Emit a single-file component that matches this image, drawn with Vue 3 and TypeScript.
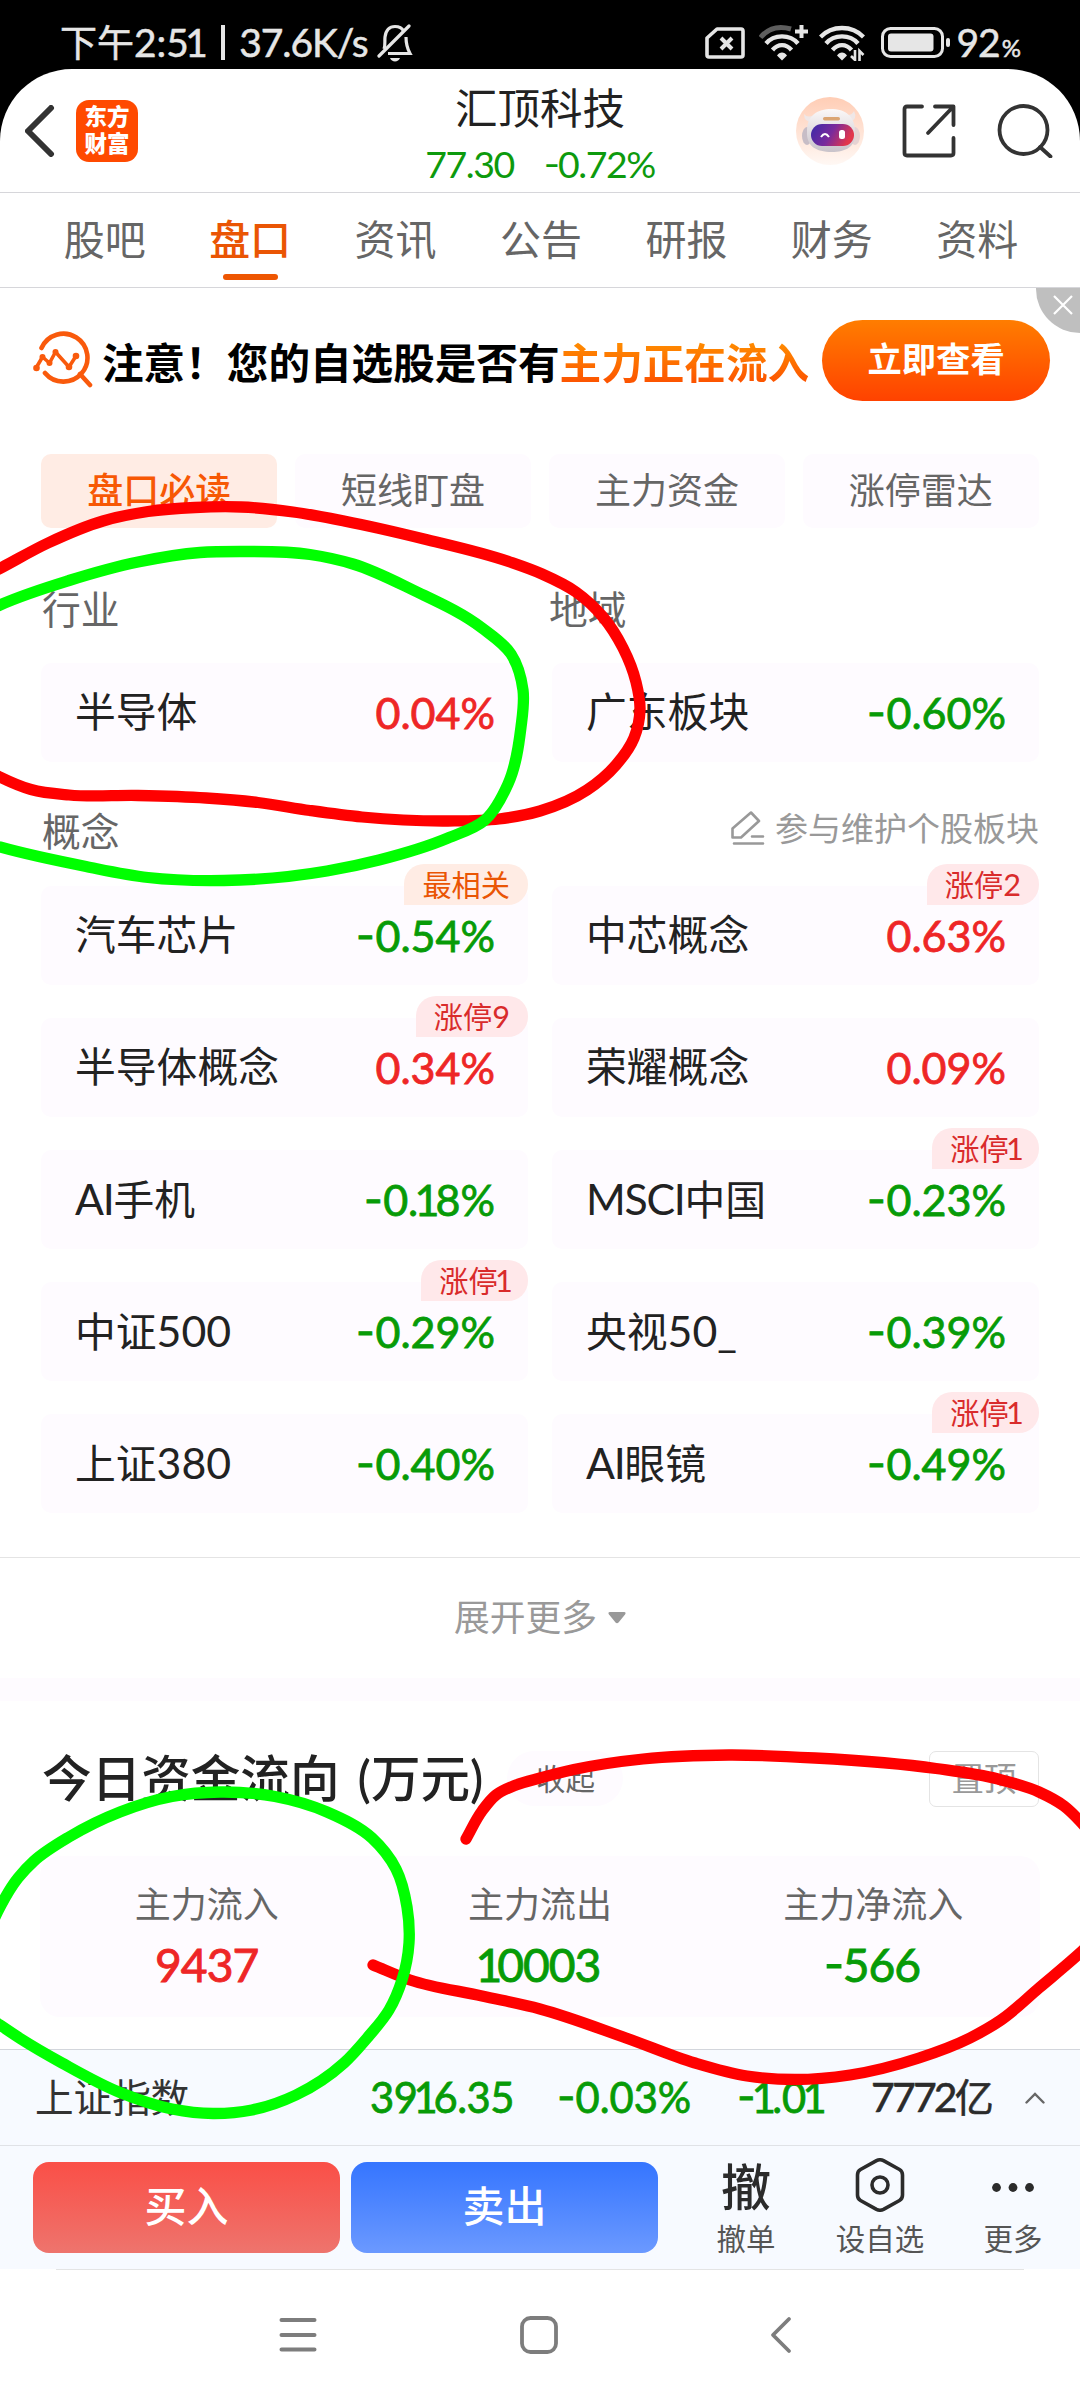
<script setup lang="ts">
import { h, type FunctionalComponent } from 'vue'

type Trend = 'up' | 'down'
interface Board {
  name: string
  change: string
  badge?: string
  hot?: boolean
}
type Point = [number, number]

// The digit 1 and the minus sign get their own spacing inside a Latin run.
const latin = (part: string) =>
  part.split(/([1-])/).filter(Boolean).map((s) => {
    if (s === '1') return h('span', { class: 'one' }, s)
    if (s === '-') return h('span', { class: 'dash' }, s)
    return s
  })

// Latin runs are set a little larger than the Chinese text around them.
const Mixed: FunctionalComponent<{ text: string }> = (props) =>
  h(
    'span',
    { class: 'mixed' },
    props.text
      .split(/([A-Za-z0-9_.:%/|-]+)/)
      .filter(Boolean)
      .map((part) => {
        if (!/^[\x20-\x7e]+$/.test(part)) return part
        return h('span', { class: /^[A-Z]+$/.test(part) ? 'latin caps' : 'latin' }, latin(part))
      }),
  )
Mixed.props = ['text']

const trend = (value: string): Trend => (value.startsWith('-') ? 'down' : 'up')

const tabs = ['股吧', '盘口', '资讯', '公告', '研报', '财务', '资料']
const chips = ['盘口必读', '短线盯盘', '主力资金', '涨停雷达']

const sectors: Board[] = [
  { name: '半导体', change: '0.04%' },
  { name: '广东板块', change: '-0.60%' },
]

const concepts: Board[] = [
  { name: '汽车芯片', change: '-0.54%', badge: '最相关', hot: true },
  { name: '中芯概念', change: '0.63%', badge: '涨停2' },
  { name: '半导体概念', change: '0.34%', badge: '涨停9' },
  { name: '荣耀概念', change: '0.09%' },
  { name: 'AI手机', change: '-0.18%' },
  { name: 'MSCI中国', change: '-0.23%', badge: '涨停1' },
  { name: '中证500', change: '-0.29%', badge: '涨停1' },
  { name: '央视50_', change: '-0.39%' },
  { name: '上证380', change: '-0.40%' },
  { name: 'AI眼镜', change: '-0.49%', badge: '涨停1' },
]

const flows: { label: string; value: string; trend: Trend }[] = [
  { label: '主力流入', value: '9437', trend: 'up' },
  { label: '主力流出', value: '10003', trend: 'down' },
  { label: '主力净流入', value: '-566', trend: 'down' },
]

// Freehand marker strokes, smoothed with a chord-length spline.
const markers: { color: string; points: Point[] }[] = [
  {
    color: '#ff0000',
    points: [
      [-30, 584], [0, 568.5], [48, 543], [103, 521], [148, 511.5], [195, 507.5], [241, 507], [293, 512], [344, 521],
      [424, 539], [510, 562], [542, 574], [576, 592], [603, 617], [623, 648], [636, 682], [640, 710], [634, 738],
      [616, 765], [587, 790], [540, 811], [499, 819], [448, 821], [362, 817], [310, 810.5], [258, 802.5],
      [206, 798], [138, 795.5], [69, 795], [31, 789.5], [0, 777], [-20, 766],
    ],
  },
  {
    color: '#ff0000',
    points: [
      [466, 1839], [482, 1811], [496, 1795], [516, 1785], [540, 1778], [574, 1769.5], [643, 1759], [729, 1755],
      [815, 1758], [936, 1768.5], [998, 1779], [1039, 1792], [1064, 1806], [1080, 1821], [1096, 1840],
    ],
  },
  {
    color: '#ff0000',
    points: [
      [1096, 1938], [1080, 1953], [1039, 1988], [1001, 2020], [970, 2038], [919, 2058], [850, 2075], [795, 2079.5],
      [747, 2076], [695, 2063], [626, 2038], [540, 2009], [482, 1996], [410, 1980], [373, 1965],
    ],
  },
  {
    color: '#00ff00',
    points: [
      [-30, 620], [0, 605], [69, 580.5], [138, 562], [200, 552.5], [241, 551.5], [310, 554.5], [353, 564], [413, 590],
      [482, 628], [511, 654], [523, 690], [521, 727], [508, 784], [485, 820], [448, 838], [379, 860], [327, 871],
      [224, 880.5], [148, 877.5], [86, 866.5], [0, 847], [-30, 838],
    ],
  },
  {
    color: '#00ff00',
    points: [
      [-30, 2002], [-16, 1945], [1, 1905], [18, 1878], [34, 1861], [69, 1837], [120, 1812], [172, 1796.5], [220, 1792],
      [275, 1796.5], [327, 1812], [372, 1838], [396, 1869], [407, 1907], [409, 1943], [402, 1980], [389, 2010],
      [368, 2037], [344, 2063], [296, 2095], [252, 2110], [213, 2113.5], [172, 2109], [120, 2092.5], [62, 2063],
      [21, 2039], [0, 2025], [-30, 2004],
    ],
  },
]

function spline(p: Point[]): string {
  const len = (a: Point, b: Point) => Math.hypot(b[0] - a[0], b[1] - a[1])
  const tangent = (i: number): Point => {
    const b = p[i]
    const a = p[i - 1] ?? b
    const c = p[i + 1] ?? b
    const u = len(a, b)
    const v = len(b, c)
    const axis = (k: 0 | 1) =>
      u && v ? (((b[k] - a[k]) / u) * v + ((c[k] - b[k]) / v) * u) / (u + v) : (c[k] - a[k]) / (u + v)
    return [axis(0), axis(1)]
  }
  let d = `M${p[0][0]} ${p[0][1]}`
  for (let i = 0; i < p.length - 1; i++) {
    const s = len(p[i], p[i + 1]) / 3
    const m = tangent(i)
    const n = tangent(i + 1)
    const [x, y] = p[i + 1]
    d += `C${p[i][0] + m[0] * s} ${p[i][1] + m[1] * s} ${x - n[0] * s} ${y - n[1] * s} ${x} ${y}`
  }
  return d
}
</script>

<template>
  <div class="phone">
    <div class="status">
      <div class="status-left">
        <Mixed text="下午2:51" class="clock" />
        <i class="bar"></i>
        <span class="speed">37.6K/s</span>
        <svg class="bell" width="36" height="38" viewBox="0 0 36 38" fill="none" stroke="#e6e6e6" stroke-width="3.2">
          <path d="M7 25C8.500 21 7.500 18 8 13C9 5.500 13 2.500 18 2.500C22 2.500 25 4 26.500 7M29 13C29 20 30 24 33 29.500H11" />
          <path d="M32 2L2 32" stroke-linecap="round" />
          <path d="M13 34H23C21.500 38.500 14.500 38.500 13 34Z" fill="#e6e6e6" stroke="none" />
        </svg>
      </div>
      <div class="status-right">
        <svg width="40" height="32" viewBox="0 0 40 32" fill="none" stroke="#e6e6e6" stroke-width="3.6">
          <path d="M12 2H36Q38 2 38 4V28Q38 30 36 30H4Q2 30 2 28V11Z" stroke-linejoin="round" />
          <path d="M16 11L27 22M27 11L16 22" stroke-width="4" />
        </svg>
        <svg class="cell" width="50" height="37" viewBox="0 0 50 37" fill="none" stroke="#e6e6e6" stroke-width="4.300">
          <path d="M1.500 13.500C9 4.500 20 1.500 32 5" stroke="#5e5e5e" stroke-width="5" />
          <path d="M7 19.500C15 10 31 10 39 19.500M13.500 26C19 19.500 27 19.500 32.500 26" />
          <path d="M18 31.500C20.500 27.500 25.500 27.500 28 31.500L23 36.500Z" fill="#e6e6e6" stroke="none" />
          <path d="M42.500 1V14M36 7.500H49" stroke-width="4" />
        </svg>
        <svg class="wifi" width="46" height="37" viewBox="0 0 46 37" fill="none" stroke="#e6e6e6" stroke-width="4.300">
          <path d="M1.500 13C13 1 33 1 44.500 13M7 19.500C15 10 31 10 39 19.500M13.500 26C19 19.500 27 19.500 32.500 26" />
          <path d="M18 31.500C20.500 27.500 25.500 27.500 28 31.500L23 36.500Z" fill="#e6e6e6" stroke="none" />
          <path d="M36 26V36L32 32M40.500 37V27L44.500 31" stroke-width="2.600" />
        </svg>
        <svg class="battery" width="70" height="32" viewBox="0 0 70 32" fill="none">
          <rect x="1.500" y="1.500" width="60" height="28" rx="8" stroke="#e6e6e6" stroke-width="3" />
          <rect x="7" y="6.500" width="45.500" height="18" rx="3" fill="#e6e6e6" />
          <rect x="65" y="11" width="4" height="9" rx="2" fill="#e6e6e6" />
        </svg>
        <span class="level">92<small>%</small></span>
      </div>
    </div>

    <div class="page">
      <header class="header">
        <div class="side">
          <svg width="30" height="52" viewBox="0 0 30 52" fill="none" stroke="#333" stroke-width="6" stroke-linecap="round" stroke-linejoin="round">
            <path d="M26 3L3 26L26 49" />
          </svg>
          <div class="logo"><span>东方</span><span>财富</span></div>
        </div>
        <div class="stock">
          <div class="stock-name">汇顶科技</div>
          <div class="quote"><span>77.30</span><Mixed text="-0.72%" /></div>
        </div>
        <div class="side right">
          <svg class="robot" width="68" height="68" viewBox="0 0 68 68">
            <defs>
              <linearGradient id="halo" x1="0" y1="0" x2="0" y2="1">
                <stop offset="0" stop-color="#ffcdb5" />
                <stop offset="1" stop-color="#fff8f4" />
              </linearGradient>
              <linearGradient id="visor" x1="0" y1="0" x2="1" y2="0.300">
                <stop offset="0" stop-color="#3a2aa8" />
                <stop offset="0.550" stop-color="#7a2a9c" />
                <stop offset="1" stop-color="#e2364c" />
              </linearGradient>
              <linearGradient id="shell" x1="0" y1="0" x2="0" y2="1">
                <stop offset="0" stop-color="#fbf8f8" />
                <stop offset="1" stop-color="#c9c3ca" />
              </linearGradient>
            </defs>
            <circle cx="34" cy="34" r="34" fill="url(#halo)" />
            <path d="M8 17Q8 25 16 25L20 17Q12 22 8 17ZM58 14Q62 22 54 25L48 17Q55 20 58 14Z" fill="#efe7e7" />
            <ellipse cx="11" cy="39" rx="5" ry="9" fill="#c7bdc6" />
            <ellipse cx="59" cy="39" rx="5" ry="9" fill="#e6d3d3" />
            <path d="M11 34C11 18 22 12 35 12C49 12 59 19 59 34C61 50 49 55 36 55C20 55 10 49 11 34Z" fill="url(#shell)" />
            <rect x="27" y="20" width="17" height="3.500" rx="1.700" fill="#dba573" />
            <rect x="15" y="27" width="43" height="22" rx="11" fill="url(#visor)" />
            <path d="M25 40Q29 34 33 40" fill="none" stroke="#fff" stroke-width="2" />
            <rect x="43" y="33" width="6" height="9" rx="2.500" fill="#fff" />
          </svg>
          <svg class="share" width="54" height="54" viewBox="0 0 54 54" fill="none" stroke="#333" stroke-width="3.800" stroke-linecap="round" stroke-linejoin="round">
            <path d="M20 2.500H5Q2.500 2.500 2.500 5V49Q2.500 51.500 5 51.500H49Q51.500 51.500 51.500 49V34" />
            <path d="M33 2.500H51.500V21M51 3L26 29" />
          </svg>
          <svg width="56" height="54" viewBox="0 0 56 54" fill="none" stroke="#333" stroke-width="3.800" stroke-linecap="round">
            <circle cx="26.500" cy="26" r="24" />
            <path d="M43 43L53.500 52.500" />
          </svg>
        </div>
      </header>

      <nav class="tabs">
        <div v-for="(tab, i) in tabs" :key="tab" class="tab" :class="{ active: i === 1 }">{{ tab }}</div>
      </nav>

      <section class="banner">
        <svg width="60" height="58" viewBox="0 0 60 58" fill="none" stroke="#f95a0c" stroke-width="4.600" stroke-linecap="round" stroke-linejoin="round">
          <path d="M8.500 17A24 24 0 1 1 12 42" />
          <path d="M47 43L57 54" />
          <path d="M3 37L9.500 26L16.500 32L22.500 21L36 36L43 25" stroke-width="3.600" />
          <g fill="#f95a0c" stroke="none">
            <circle cx="3.500" cy="37" r="3.300" /><circle cx="9.500" cy="26" r="3" /><circle cx="16.500" cy="32" r="3" />
            <circle cx="22.500" cy="21" r="3" /><circle cx="36" cy="36" r="3.300" /><circle cx="43" cy="25" r="3.300" />
          </g>
        </svg>
        <p>注意！您的自选股是否有<em>主力正在流入</em></p>
        <button class="cta">立即查看</button>
        <div class="close">
          <svg width="20" height="20" viewBox="0 0 20 20" stroke="#fff" stroke-width="2.200"><path d="M1 1L19 19M19 1L1 19" /></svg>
        </div>
      </section>

      <div class="chips">
        <div v-for="(chip, i) in chips" :key="chip" class="chip" :class="{ active: i === 0 }">{{ chip }}</div>
      </div>

      <div class="labels two"><span>行业</span><span>地域</span></div>
      <div class="grid sectors">
        <div v-for="s in sectors" :key="s.name" class="card">
          <Mixed :text="s.name" class="name" />
          <Mixed :text="s.change" class="pct" :class="trend(s.change)" />
        </div>
      </div>

      <div class="labels concept-head">
        <span>概念</span>
        <div class="maintain">
          <svg width="34" height="34" viewBox="0 0 34 34" fill="none" stroke="#999" stroke-width="2.600" stroke-linecap="round" stroke-linejoin="round">
            <path d="M1.500 17.500L20 1.500L28 10L10 26.500H1.500ZM21 25.500H32M3 32.500H32" />
          </svg>
          参与维护个股板块
        </div>
      </div>
      <div class="grid concepts">
        <div v-for="c in concepts" :key="c.name" class="card">
          <Mixed :text="c.name" class="name" />
          <Mixed :text="c.change" class="pct" :class="trend(c.change)" />
          <div v-if="c.badge" class="badge" :class="{ hot: c.hot }"><Mixed :text="c.badge" /></div>
        </div>
      </div>

      <div class="expand">
        展开更多
        <svg width="18" height="12" viewBox="0 0 18 12"><path d="M2 0H16Q18.500 0 17 2.500L10.500 10.500Q9 12 7.500 10.500L1 2.500Q-0.500 0 2 0Z" fill="#999" /></svg>
      </div>
      <div class="band"></div>

      <div class="flow-head">
        <h2>今日资金流向<span>(万元)</span></h2>
        <div class="collapse">收起</div>
        <div class="pin">置顶</div>
      </div>
      <div class="flow">
        <div v-for="f in flows" :key="f.label" class="flow-item">
          <span>{{ f.label }}</span>
          <b :class="f.trend"><Mixed :text="f.value" /></b>
        </div>
      </div>

      <footer class="footer">
        <div class="index">
          <span class="index-name">上证指数</span>
          <Mixed text="3916.35" class="num down point" />
          <Mixed text="-0.03%" class="num down rate" />
          <Mixed text="-1.01" class="num down diff" />
          <Mixed text="7772亿" class="turnover" />
          <svg width="20" height="12" viewBox="0 0 20 12" fill="none" stroke="#666" stroke-width="2.400" stroke-linecap="round"><path d="M1.500 10.500L10 2L18.500 10.500" /></svg>
        </div>
        <div class="actions">
          <button class="trade buy">买入</button>
          <button class="trade sell">卖出</button>
          <div class="act cancel"><strong>撤</strong><span>撤单</span></div>
          <div class="act fav">
            <svg width="50" height="54" viewBox="0 0 50 54" fill="none" stroke="#2b2b2b" stroke-width="3.600" stroke-linejoin="round">
              <path d="M21.500 2.700Q25 .900 28.500 2.700L44.500 11.500Q47.500 13.200 47.500 17V37Q47.500 40.800 44.500 42.500L28.500 51.300Q25 53.100 21.500 51.300L5.500 42.500Q2.500 40.800 2.500 37V17Q2.500 13.200 5.500 11.500Z" />
              <circle cx="25" cy="27" r="8" />
            </svg>
            <span>设自选</span>
          </div>
          <div class="act more">
            <svg width="44" height="54" viewBox="0 0 44 54" fill="#2b2b2b">
              <circle cx="5.500" cy="29.500" r="4.400" /><circle cx="22" cy="29.500" r="4.400" /><circle cx="38.500" cy="29.500" r="4.400" />
            </svg>
            <span>更多</span>
          </div>
        </div>
      </footer>

      <div class="sysnav">
        <svg width="38" height="38" viewBox="0 0 38 38" stroke="#7d7d7d" stroke-width="4" stroke-linecap="round"><path d="M2.500 4H35.500M2.500 19H35.500M2.500 33.500H35.500" /></svg>
        <svg class="home" width="38" height="38" viewBox="0 0 38 38" fill="none" stroke="#7d7d7d" stroke-width="3.800"><rect x="2" y="2" width="34" height="34" rx="8.500" /></svg>
        <svg width="22" height="38" viewBox="0 0 22 38" fill="none" stroke="#7d7d7d" stroke-width="3.800" stroke-linecap="round" stroke-linejoin="round"><path d="M19 3L3 19L19 35" /></svg>
      </div>
    </div>

    <svg class="ink" width="1080" height="2400" viewBox="0 0 1080 2400" fill="none" stroke-width="11.300" stroke-linecap="round" stroke-linejoin="round">
      <path v-for="(m, i) in markers" :key="i" :d="spline(m.points)" :stroke="m.color" />
    </svg>
  </div>
</template>

<style>
body {
  background: #000;
}
.mixed .latin {
  font-size: 1.05em;
}
.mixed .caps {
  letter-spacing: -0.03em;
}
.mixed .one {
  margin: 0 -0.09em;
}
.mixed .dash {
  display: inline-block;
  transform: translateY(-0.04em) scaleX(1.2);
  transform-origin: right center;
}
</style>

<style scoped>
.phone {
  position: relative;
  width: 1080px;
  height: 2400px;
  overflow: hidden;
  background: #000;
  font-family: Lato, 'Noto Sans CJK SC', sans-serif;
  line-height: 1;
  color: #222;
  white-space: nowrap;
}
.phone * {
  box-sizing: border-box;
}
svg {
  display: block;
  flex: none;
}
button {
  border: 0;
  padding: 0;
  font: inherit;
  color: #fff;
}
.up {
  color: #ee2626;
}
.down {
  color: #079b07;
}

/* status bar */
.status {
  height: 69px;
  display: flex;
  justify-content: space-between;
  color: #e6e6e6;
  padding: 0 60px;
}
.status-left,
.status-right {
  display: flex;
  align-items: center;
  height: 85px;
}
.clock {
  font-size: 37px;
  -webkit-text-stroke: 0.5px;
}
.bar {
  width: 4px;
  height: 35px;
  background: #e6e6e6;
  margin: 0 14px 0 17px;
}
.speed {
  font-size: 39px;
  letter-spacing: -1.1px;
  -webkit-text-stroke: 0.5px;
}
.bell {
  margin-left: 9px;
}
.cell {
  margin-left: 14px;
}
.wifi {
  margin-left: 10px;
}
.battery {
  margin-left: 16px;
}
.level {
  font-size: 39px;
  margin-left: 6px;
  letter-spacing: -1px;
  -webkit-text-stroke: 0.5px;
}
.level small {
  font-size: 24px;
  margin-left: 2px;
}

.page {
  height: 2331px;
  background: #fff;
  border-radius: 72px 72px 0 0;
  overflow: hidden;
}

/* header */
.header {
  height: 124px;
  border-bottom: 1px solid #d6d6da;
  display: grid;
  grid-template-columns: 1fr auto 1fr;
}
.side {
  display: flex;
  align-items: center;
  padding-left: 25px;
}
.logo {
  margin-left: 21px;
  width: 62px;
  height: 62px;
  border-radius: 13px;
  background: #ff4a00;
  color: #fff;
  font-size: 22.500px;
  font-weight: 900;
  display: flex;
  flex-direction: column;
  align-items: center;
  justify-content: center;
  gap: 4px;
}
.side.right {
  justify-content: flex-end;
  padding: 0 27px 0 0;
}
.share {
  margin: 0 41px 0 38px;
}
.stock {
  text-align: center;
  padding-top: 17px;
}
.stock-name {
  font-size: 42.500px;
  line-height: 44px;
}
.quote {
  display: flex;
  gap: 32px;
  justify-content: center;
  align-items: baseline;
  margin-top: 13px;
  font-size: 37.500px;
  line-height: 42px;
  letter-spacing: -1.500px;
  color: #0d9a0d;
}
.quote .mixed {
  font-size: 35.700px;
}

/* tabs */
.tabs {
  height: 95px;
  padding: 0 30px 0 32px;
  display: flex;
  border-bottom: 1px solid #d6d6da;
}
.tab {
  flex: 1;
  display: flex;
  flex-direction: column;
  align-items: center;
  font-size: 41px;
  line-height: 94px;
  color: #666;
}
.tab.active {
  color: #ea5504;
  font-weight: 500;
}
.tab.active::after {
  content: '';
  width: 55px;
  height: 6px;
  margin-top: -13px;
  border-radius: 3px;
  background: #ee5602;
}

/* promotion */
.banner {
  position: relative;
  height: 144px;
  display: flex;
  align-items: center;
  padding-left: 33px;
}
.banner p {
  margin: 7px 0 0 9px;
  font-size: 41.600px;
  font-weight: 700;
  color: #000;
}
.banner em {
  font-style: normal;
  color: transparent;
  background: linear-gradient(#ff9200, #fc4c00);
  background-clip: text;
  -webkit-background-clip: text;
}
.cta {
  width: 228px;
  height: 81px;
  margin-left: 13px;
  border-radius: 41px;
  background: linear-gradient(#ff7d00, #ff4200);
  font-size: 34.300px;
  font-weight: 700;
  padding-bottom: 2px;
}
.close {
  position: absolute;
  top: 0;
  right: 0;
  width: 44px;
  height: 45px;
  border-bottom-left-radius: 44px;
  background: #bfbfbf;
  padding: 7px 0 0 17px;
}

/* chips */
.chips {
  margin: 22px 41px 0;
  display: flex;
  gap: 17.500px;
}
.chip {
  flex: 1;
  height: 74px;
  border-radius: 10px;
  background: #fefbff;
  color: #666;
  font-size: 36px;
  line-height: 73px;
  text-align: center;
}
.chip.active {
  background: #ffece4;
  color: #f75804;
  font-weight: 500;
}

/* boards */
.labels {
  padding: 0 41px 0 42px;
  font-size: 38.800px;
  color: #666;
  display: flex;
}
.two {
  margin-top: 61px;
  line-height: 40px;
}
.two span {
  flex: none;
  width: 507px;
}
.concept-head {
  margin-top: 44px;
  height: 50px;
  line-height: 50px;
  justify-content: space-between;
}
.maintain {
  display: flex;
  align-items: center;
  gap: 10px;
  font-size: 33px;
  line-height: 44px;
  height: 44px;
  color: #999;
}
.grid {
  display: grid;
  grid-template-columns: 487px 487px;
  column-gap: 24px;
  row-gap: 33px;
  padding: 0 41px;
}
.sectors {
  margin-top: 34px;
}
.concepts {
  margin-top: 30px;
}
.card {
  position: relative;
  height: 99px;
  border-radius: 10px;
  background: #fefbff;
  display: flex;
  align-items: center;
  justify-content: space-between;
  padding: 0 33px 0 34px;
}
.name {
  font-size: 40.800px;
}
.pct {
  font-size: 41px;
  -webkit-text-stroke: 0.800px;
}
.badge {
  position: absolute;
  right: 0;
  top: -22px;
  height: 41px;
  padding: 0 18px;
  border-radius: 20px 20px 20px 0;
  background: #ffe8ea;
  color: #d92b2b;
  font-size: 29.200px;
  line-height: 41px;
}
.badge.hot {
  background: #ffece4;
  color: #ea5504;
}
.expand {
  margin-top: 44px;
  height: 121px;
  border-top: 1px solid #e4e4e4;
  display: flex;
  align-items: center;
  justify-content: center;
  gap: 11px;
  font-size: 35.800px;
  color: #999;
}
.band {
  height: 23px;
  background: #fefbff;
}

/* money flow */
.flow-head {
  margin-top: 50px;
  height: 55px;
  padding: 0 41px 0 42px;
  display: flex;
  align-items: center;
}
h2 {
  margin: 0;
  font-size: 49.600px;
  font-weight: 500;
}
h2 span {
  margin-left: 18px;
}
.collapse {
  width: 116px;
  height: 55px;
  margin-left: 24px;
  border-radius: 28px;
  background: #fefbff;
  font-size: 29.500px;
  line-height: 55px;
  text-align: center;
  color: #666;
}
.pin {
  width: 110px;
  height: 56px;
  margin-left: auto;
  border: 1px solid #e4e4e4;
  border-radius: 7px;
  font-size: 32.500px;
  line-height: 54px;
  text-align: center;
  color: #999;
}
.flow {
  margin: 50px 40px 0;
  height: 161px;
  border-radius: 20px;
  background: #fefbff;
  display: flex;
}
.flow-item {
  flex: 1;
  display: flex;
  flex-direction: column;
  align-items: center;
  padding-top: 28px;
}
.flow-item span {
  font-size: 36px;
  line-height: 40px;
  color: #666;
}
.flow-item b {
  font-size: 44px;
  font-weight: 400;
  line-height: 80px;
  letter-spacing: -1px;
  -webkit-text-stroke: 0.900px;
}
.flow-item b .mixed {
  font-size: inherit;
  line-height: inherit;
  color: inherit;
}

/* footer */
.footer {
  margin-top: 32px;
  height: 220px;
  border-top: 1px solid #d3d6dc;
  background: #f7faff;
}
.index {
  height: 96px;
  border-bottom: 1px solid #e0e2e6;
  padding-left: 35px;
  display: flex;
  align-items: center;
}
.index-name {
  width: 335px;
  font-size: 38.600px;
  color: #333;
}
.num {
  font-size: 39.700px;
  -webkit-text-stroke: 0.800px;
}
.point {
  width: 190px;
  letter-spacing: -0.500px;
}
.rate {
  width: 180px;
}
.diff {
  width: 131px;
}
.turnover {
  width: 154px;
  font-size: 39px;
  letter-spacing: -2.800px;
  color: #2b2b2b;
  -webkit-text-stroke: 0.600px;
}
.actions {
  display: flex;
  height: 123px;
  padding: 16px 0 0 33px;
}
.trade {
  width: 307px;
  height: 91px;
  border-radius: 16px;
  font-size: 42px;
  font-weight: 500;
  margin-right: 11px;
  padding-bottom: 4px;
}
.buy {
  background: linear-gradient(#fa4f47, #ee746d);
}
.sell {
  background: linear-gradient(#3575ff, #6b99ff);
}
.act {
  display: flex;
  flex-direction: column;
  align-items: center;
  margin-top: -4px;
  color: #2b2b2b;
}
.act strong {
  height: 54px;
  font-size: 50px;
  line-height: 58px;
  font-weight: 500;
}
.act span {
  margin-top: 10px;
  font-size: 29.500px;
  line-height: 34px;
  color: #555;
}
.cancel {
  width: 100px;
  margin-left: 27px;
}
.fav {
  width: 100px;
  margin-left: 34px;
}
.more {
  width: 100px;
  margin-left: 33px;
}

/* system navigation */
.sysnav {
  height: 131px;
  margin: 0 56px;
  border-top: 1px solid #e4e4e4;
  display: flex;
  align-items: center;
  padding-left: 222.500px;
}
.home {
  margin: 0 212px 0 203px;
}

.ink {
  position: absolute;
  left: 0;
  top: 0;
  pointer-events: none;
}
</style>
